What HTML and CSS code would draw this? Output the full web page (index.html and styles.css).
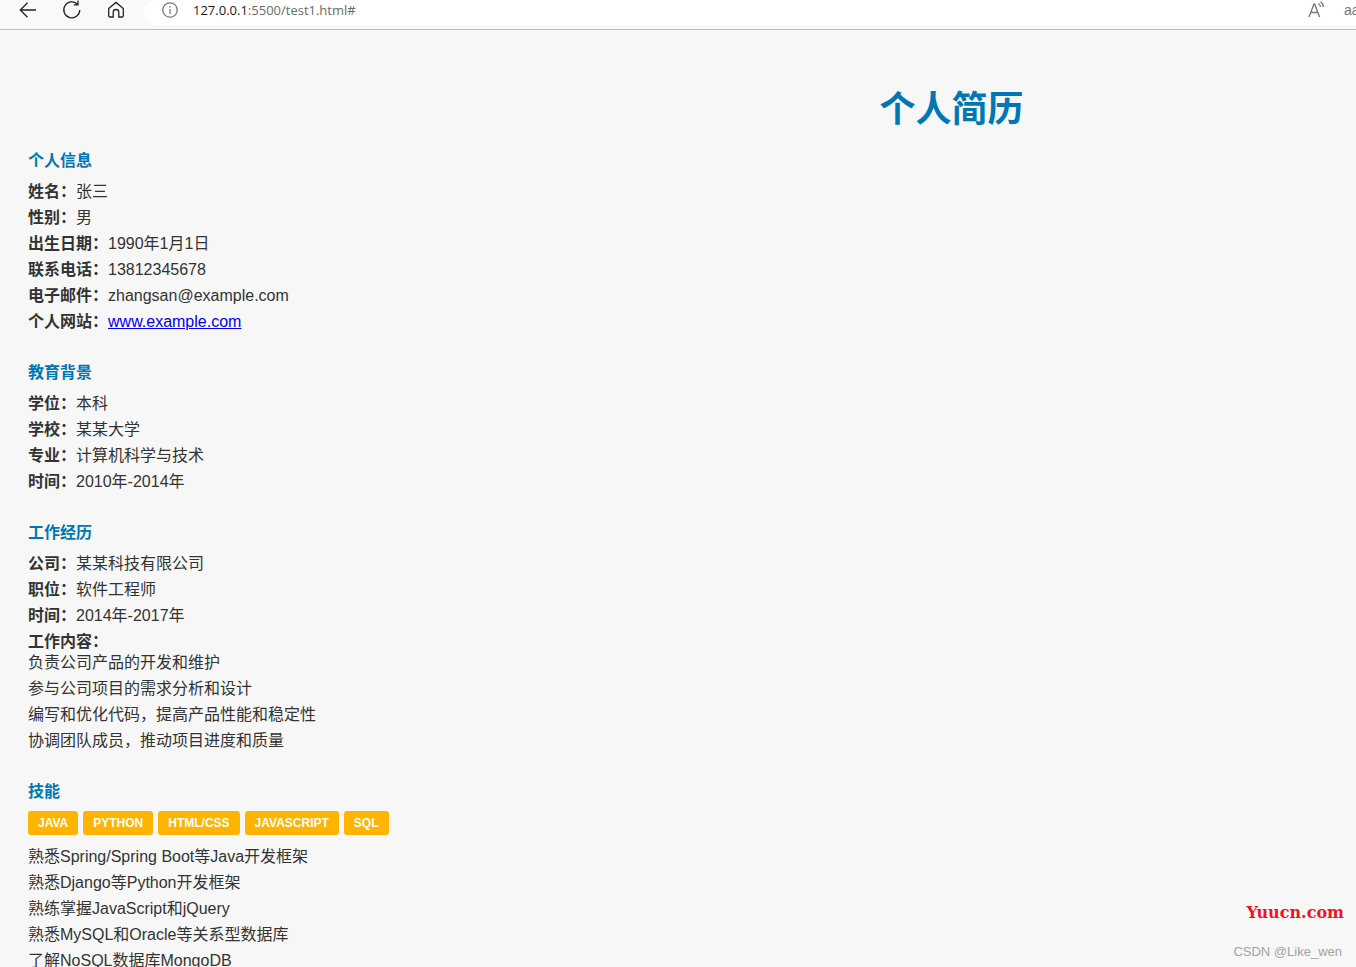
FILE: index.html
```html
<!DOCTYPE html>
<html lang="zh-CN">
<head>
<meta charset="utf-8">
<title>个人简历</title>
<link rel="stylesheet" href="styles.css">
</head>
<body>
<header class="toolbar">
  <button class="tool tool-back" aria-label="后退"><svg width="20" height="20" viewBox="0 0 20 20"><path d="M18 10H2.500M9.500 2.800 2.300 10l7.200 7.200" /></svg></button>
  <button class="tool tool-reload" aria-label="刷新"><svg width="20" height="20" viewBox="0 0 20 20"><path d="M15.200 3.900A8 8 0 1 0 17.800 10M16 .6v4.200h-4.200" /></svg></button>
  <button class="tool tool-home" aria-label="主页"><svg width="18" height="18" viewBox="0 0 18 18"><path d="M1.700 7.600 9 1.400l7.300 6.200v7.100a1.300 1.300 0 0 1-1.300 1.300h-3.200v-4.700a2.800 2.800 0 0 0-5.600 0V16H3a1.300 1.300 0 0 1-1.300-1.300z" /></svg></button>
  <div class="address">
    <svg class="info" width="16" height="16" viewBox="0 0 16 16"><circle cx="8" cy="8" r="7.200" /><path d="M8 7v5M8 4v1.400" /></svg>
    <span class="url"><span class="host">127.0.0.1</span>:5500/test1.html#</span>
    <svg class="read" width="18" height="18" viewBox="0 0 18 18"><path d="M1 16 6 3h.6l5 13M2.800 11.500h7M10.500 2.500c1.400.9 2 2.200 2 3.600M12.500.8c2 1.300 3 3.200 3 5.300" /></svg>
    <span class="aa">aa</span>
  </div>
</header>
<main class="page">
  <h1 class="title">个人简历</h1>

  <section class="section">
    <h2 class="section-title">个人信息</h2>
    <p class="row"><strong>姓名：</strong>张三</p>
    <p class="row"><strong>性别：</strong>男</p>
    <p class="row"><strong>出生日期：</strong>1990年1月1日</p>
    <p class="row"><strong>联系电话：</strong>13812345678</p>
    <p class="row"><strong>电子邮件：</strong>zhangsan@example.com</p>
    <p class="row"><strong>个人网站：</strong><a href="#">www.example.com</a></p>
  </section>

  <section class="section">
    <h2 class="section-title">教育背景</h2>
    <p class="row"><strong>学位：</strong>本科</p>
    <p class="row"><strong>学校：</strong>某某大学</p>
    <p class="row"><strong>专业：</strong>计算机科学与技术</p>
    <p class="row"><strong>时间：</strong>2010年-2014年</p>
  </section>

  <section class="section">
    <h2 class="section-title">工作经历</h2>
    <p class="row"><strong>公司：</strong>某某科技有限公司</p>
    <p class="row"><strong>职位：</strong>软件工程师</p>
    <p class="row"><strong>时间：</strong>2014年-2017年</p>
    <p class="row row-label"><strong>工作内容：</strong></p>
    <ul class="list">
      <li>负责公司产品的开发和维护</li>
      <li>参与公司项目的需求分析和设计</li>
      <li>编写和优化代码，提高产品性能和稳定性</li>
      <li>协调团队成员，推动项目进度和质量</li>
    </ul>
  </section>

  <section class="section">
    <h2 class="section-title">技能</h2>
    <div class="tags">
      <span class="tag">Java</span>
      <span class="tag">Python</span>
      <span class="tag">HTML/CSS</span>
      <span class="tag">JavaScript</span>
      <span class="tag">SQL</span>
    </div>
    <ul class="list">
      <li>熟悉Spring/Spring Boot等Java开发框架</li>
      <li>熟悉Django等Python开发框架</li>
      <li>熟练掌握JavaScript和jQuery</li>
      <li>熟悉MySQL和Oracle等关系型数据库</li>
      <li>了解NoSQL数据库MongoDB</li>
    </ul>
  </section>
</main>
<div class="watermark">
  <span class="wm-site">Yuucn.com</span>
  <span class="wm-author">CSDN @Like_wen</span>
</div>
</body>
</html>
```

FILE: styles.css
```css
* { box-sizing: border-box; }

html, body {
  margin: 0;
  height: 967px;
  overflow: hidden;
}

body {
  position: relative;
  width: 1356px;
  background: #f7f7f7;
  color: #333;
  font-family: "Liberation Sans", "Noto Sans CJK SC", sans-serif;
  font-size: 16px;
  line-height: 26px;
}

.toolbar {
  display: flex;
  align-items: flex-start;
  height: 30px;
  padding-left: 18px;
  background: #f9f9f9;
  border-bottom: 1px solid #bdbdbd;
}

.tool {
  display: flex;
  padding: 0;
  border: 0;
  background: none;
}

.tool svg, .address svg {
  fill: none;
  stroke-width: 1.3;
}

.tool svg { stroke: #222; }

.tool-back { margin-right: 24px; }
.tool-reload { margin-right: 25px; }
.tool-home { margin-right: 19px; }
.tool-home svg { margin-top: 1px; }

.address {
  display: flex;
  align-items: center;
  flex: 1;
  height: 25px;
  padding: 0 0 5px 18px;
  background: #fff;
  border-radius: 14px 0 0 14px;
  overflow: hidden;
}

.info { stroke: #777; margin-right: 15px; }

.url {
  color: #6b6b6b;
  font-family: "Open Sans", "Liberation Sans", sans-serif;
  font-size: 13px;
  line-height: 20px;
}

.host { color: #1b1b1b; }

.read {
  margin-left: auto;
  stroke: #777;
}

.aa {
  width: 12px;
  margin-left: 18px;
  color: #777;
  font-size: 14px;
  white-space: nowrap;
}

.page {
  width: 1875px;
  padding-left: 28px;
}

.title {
  margin: 54px 0 12px;
  color: #0077b5;
  font-size: 36px;
  line-height: 52px;
  text-align: center;
}

.section { margin-bottom: 25px; }

.section-title {
  margin: 0 0 5px;
  color: #0077b5;
  font-size: 16px;
  line-height: 26px;
}

.row { margin: 0; }
.row-label { height: 21px; }
.row-label strong { display: block; }

.list {
  margin: 0;
  padding: 0;
  list-style: none;
}

.tags {
  display: flex;
  gap: 5px;
  margin: 6px 0 9px;
}

.tag {
  height: 24px;
  padding: 0 10px;
  background: #ffb400;
  border-radius: 3px;
  color: #fff;
  font-size: 12px;
  font-weight: bold;
  line-height: 24px;
  text-transform: uppercase;
}

.watermark {
  position: absolute;
  right: 12px;
  bottom: 5px;
  display: flex;
  flex-direction: column;
  align-items: flex-end;
  gap: 19px;
}

.wm-site {
  color: #f01325;
  font-family: "DejaVu Serif", serif;
  font-size: 16px;
  font-weight: bold;
  line-height: 20px;
}

.wm-author {
  margin-right: 2px;
  color: #a3a3a3;
  font-size: 13px;
  line-height: 20px;
}
```
